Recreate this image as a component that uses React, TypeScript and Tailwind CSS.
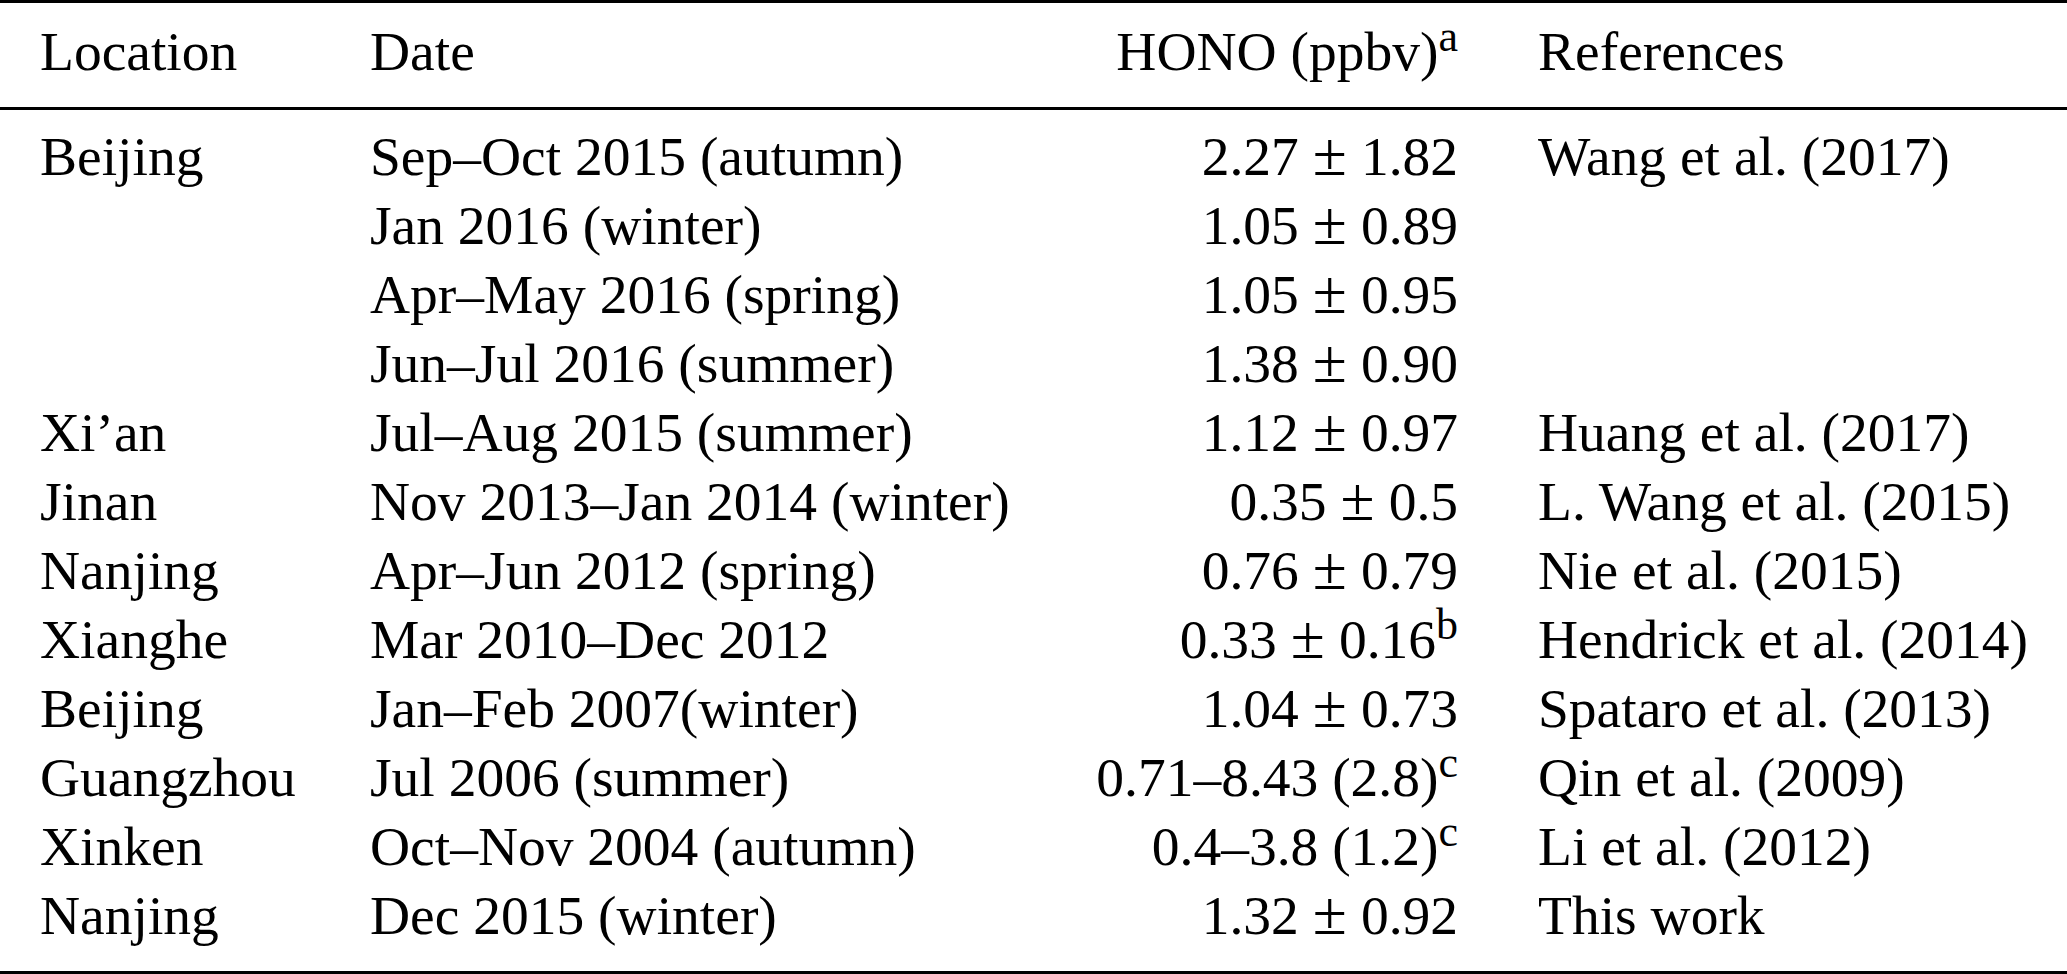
import React from 'react'

type Row = {
  location: string
  date: string
  hono: React.ReactNode
  reference: string
}

const Sup: React.FC<{ children: React.ReactNode }> = ({ children }) => (
  <span className="relative -top-[19px] text-[44px] leading-none">{children}</span>
)

// value ± error, the ± is drawn a bit bigger like the math glyph in the pdf
const pm = (a: string, b: string, note?: string) => (
  <>
    {a}
    <span className="mx-[14px] text-[62px] leading-[0]">±</span>
    {b}
    {note ? <Sup>{note}</Sup> : null}
  </>
)

const rows: Row[] = [
  { location: 'Beijing', date: 'Sep–Oct 2015 (autumn)', hono: pm('2.27', '1.82'), reference: 'Wang et al. (2017)' },
  { location: '', date: 'Jan 2016 (winter)', hono: pm('1.05', '0.89'), reference: '' },
  { location: '', date: 'Apr–May 2016 (spring)', hono: pm('1.05', '0.95'), reference: '' },
  { location: '', date: 'Jun–Jul 2016 (summer)', hono: pm('1.38', '0.90'), reference: '' },
  { location: 'Xi’an', date: 'Jul–Aug 2015 (summer)', hono: pm('1.12', '0.97'), reference: 'Huang et al. (2017)' },
  { location: 'Jinan', date: 'Nov 2013–Jan 2014 (winter)', hono: pm('0.35', '0.5'), reference: 'L. Wang et al. (2015)' },
  { location: 'Nanjing', date: 'Apr–Jun 2012 (spring)', hono: pm('0.76', '0.79'), reference: 'Nie et al. (2015)' },
  { location: 'Xianghe', date: 'Mar 2010–Dec 2012', hono: pm('0.33', '0.16', 'b'), reference: 'Hendrick et al. (2014)' },
  { location: 'Beijing', date: 'Jan–Feb 2007(winter)', hono: pm('1.04', '0.73'), reference: 'Spataro et al. (2013)' },
  {
    location: 'Guangzhou',
    date: 'Jul 2006 (summer)',
    hono: (
      <>
        0.71–8.43 (2.8)<Sup>c</Sup>
      </>
    ),
    reference: 'Qin et al. (2009)',
  },
  {
    location: 'Xinken',
    date: 'Oct–Nov 2004 (autumn)',
    hono: (
      <>
        0.4–3.8 (1.2)<Sup>c</Sup>
      </>
    ),
    reference: 'Li et al. (2012)',
  },
  { location: 'Nanjing', date: 'Dec 2015 (winter)', hono: pm('1.32', '0.92'), reference: 'This work' },
]

const gridCols = 'grid grid-cols-[330px_700px_388px_1fr] pl-[40px]'

const App: React.FC = () => {
  return (
    <div className="h-[974px] w-[2067px] overflow-hidden bg-white text-black">
      <div
        className="text-[55.5px] leading-[69px] whitespace-nowrap"
        style={{ fontFamily: '"Liberation Serif", "Times New Roman", serif' }}
      >
        {/* top rule */}
        <div className="h-[3px] bg-black" />

        {/* header */}
        <div className={`${gridCols} pt-[14px] pb-[21px]`}>
          <div>Location</div>
          <div>Date</div>
          <div className="text-right">
            HONO (ppbv)<Sup>a</Sup>
          </div>
          <div className="pl-[80px]">References</div>
        </div>

        {/* mid rule */}
        <div className="h-[3px] bg-black" />

        {/* body */}
        <div className="pt-[12px] pb-[21px]">
          {rows.map((row, i) => (
            <div key={i} className={gridCols}>
              <div>{row.location}</div>
              <div>{row.date}</div>
              <div className="text-right">{row.hono}</div>
              <div className="pl-[80px]">{row.reference}</div>
            </div>
          ))}
        </div>

        {/* bottom rule */}
        <div className="h-[3px] bg-black" />
      </div>
    </div>
  )
}

export default App
